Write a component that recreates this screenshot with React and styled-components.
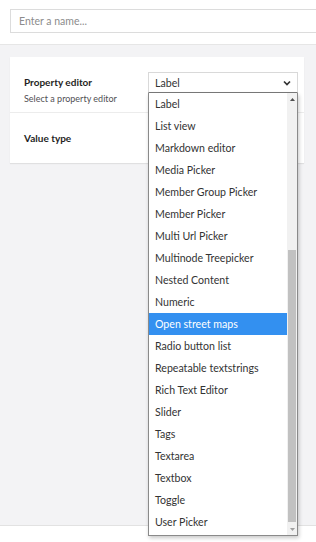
import React from 'react'
import styled, { createGlobalStyle } from 'styled-components'

const GlobalStyle = createGlobalStyle`
  html, body {
    margin: 0;
    padding: 0;
    background: #fff;
    font-family: Lato, "Open Sans", "Liberation Sans", sans-serif;
    overflow: hidden;
  }
  * { box-sizing: border-box; }
`

const editors = [
  'Label',
  'List view',
  'Markdown editor',
  'Media Picker',
  'Member Group Picker',
  'Member Picker',
  'Multi Url Picker',
  'Multinode Treepicker',
  'Nested Content',
  'Numeric',
  'Open street maps',
  'Radio button list',
  'Repeatable textstrings',
  'Rich Text Editor',
  'Slider',
  'Tags',
  'Textarea',
  'Textbox',
  'Toggle',
  'User Picker',
]

const App = () => {
  return (
    <Page>
      <GlobalStyle />
      <TopBar>
        <NameInput placeholder='Enter a name...' />
      </TopBar>

      <Main>
        <Panel>
          <Row $divider>
            <LabelCol>
              <FieldTitle>Property editor</FieldTitle>
              <FieldHint>Select a property editor</FieldHint>
            </LabelCol>
            <SelectWrap>
              <Select>
                <span>Label</span>
                <svg width='8' height='6' viewBox='0 0 8 6'>
                  <path d='M1 1.5l3 3 3-3' fill='none' stroke='#333' strokeWidth='1.7' />
                </svg>
              </Select>
              <DropList>
                <Options>
                  {editors.map((name) => (
                    <Option key={name} $active={name === 'Open street maps'}>
                      {name}
                    </Option>
                  ))}
                </Options>
                <ScrollBar>
                  <Arrow>
                    <svg width='5' height='3' viewBox='0 0 5 3'>
                      <path d='M0 3L2.5 0L5 3z' fill='#505050' />
                    </svg>
                  </Arrow>
                  <Track>
                    <Thumb />
                  </Track>
                  <Arrow>
                    <svg width='5' height='3' viewBox='0 0 5 3'>
                      <path d='M0 0L2.5 3L5 0z' fill='#a0a0a0' />
                    </svg>
                  </Arrow>
                </ScrollBar>
              </DropList>
            </SelectWrap>
          </Row>
          <Row $second>
            <LabelCol>
              <FieldTitle>Value type</FieldTitle>
            </LabelCol>
          </Row>
        </Panel>
      </Main>

      <Footer />
    </Page>
  )
}

const Page = styled.div`
  width: 316px;
  height: 542px;
  display: flex;
  flex-direction: column;
  overflow: hidden;
`

const TopBar = styled.div`
  height: 45px;
  padding: 9px 0 0 10px;
  background: #fff;
  border-bottom: 1px solid #e6e6e6;
  overflow: hidden;
`

const NameInput = styled.input`
  width: 316px;
  height: 24px;
  border: 1px solid #dcdcdc;
  border-right: none;
  padding: 0 8px;
  font-family: Lato, sans-serif;
  font-size: 10.5px;
  color: #333;
  outline: none;
  &::placeholder {
    color: #8c8c8c;
  }
`

const Main = styled.div`
  height: 481px;
  background: #f3f3f5;
  padding: 12px 12px 0 10px;
  border-bottom: 1px solid #e2e2e2;
`

const Panel = styled.div`
  background: #fff;
  height: 106px;
  box-shadow: 0 1px 1px rgba(0, 0, 0, 0.08);
`

const Row = styled.div`
  display: grid;
  grid-template-columns: 124px 150px;
  padding: ${(p) => (p.$second ? '15px 14px 0' : '15px 14px 0')};
  height: ${(p) => (p.$second ? '50px' : '56px')};
  border-bottom: ${(p) => (p.$divider ? '1px solid #ececec' : 'none')};
`

const LabelCol = styled.div`
  display: flex;
  flex-direction: column;
`

const FieldTitle = styled.div`
  margin-top: 3px;
  font-size: 10px;
  line-height: 14px;
  font-weight: 700;
  color: #1f1f24;
`

const FieldHint = styled.div`
  margin-top: 4px;
  font-size: 9px;
  line-height: 12px;
  color: #515054;
`

const SelectWrap = styled.div`
  position: relative;
  width: 150px;
`

const Select = styled.div`
  height: 21px;
  display: flex;
  align-items: center;
  justify-content: space-between;
  padding: 0 6px 0 6px;
  border: 1px solid #d9d9d9;
  border-bottom-color: #7a7a7a;
  font-size: 10.6px;
  color: #333;
`

const DropList = styled.div`
  position: absolute;
  top: 21px;
  left: 0;
  width: 150px;
  height: 443px;
  display: flex;
  background: #fff;
  border: 1px solid #8a8a8a;
  border-top: none;
  box-shadow: 1px 2px 4px rgba(0, 0, 0, 0.22);
  z-index: 10;
`

const Options = styled.div`
  flex: 1;
  display: flex;
  flex-direction: column;
`

const Option = styled.div`
  height: 22px;
  display: flex;
  align-items: center;
  padding-left: 6px;
  font-size: 10.6px;
  color: ${(p) => (p.$active ? '#fff' : '#333')};
  background: ${(p) => (p.$active ? '#3390f0' : 'transparent')};
  white-space: nowrap;
`

const ScrollBar = styled.div`
  width: 10px;
  display: flex;
  flex-direction: column;
  background: #f1f1f1;
`

const Arrow = styled.div`
  height: 12px;
  display: flex;
  align-items: center;
  justify-content: center;
`

const Track = styled.div`
  flex: 1;
  display: flex;
  flex-direction: column;
  justify-content: flex-end;
  padding: 0 1px 1px;
`

const Thumb = styled.div`
  height: 272px;
  background: #c1c1c1;
`

const Footer = styled.div`
  flex: 1;
  background: #fff;
`

export default App
